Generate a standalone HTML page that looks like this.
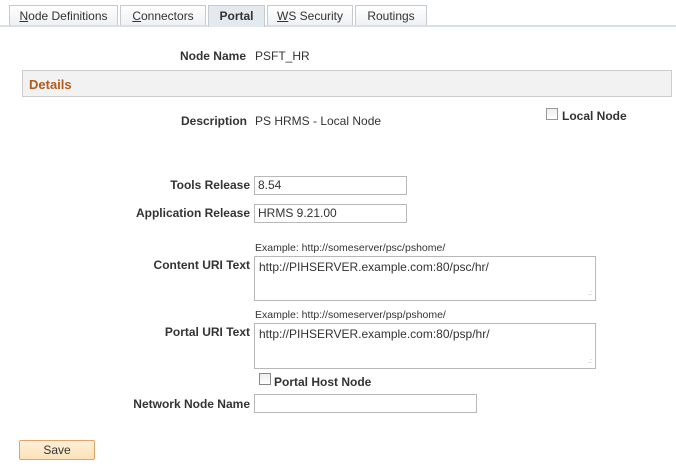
<!DOCTYPE html>
<html><head><style>
body{margin:0;width:676px;height:466px;background:#fff;font-family:"Liberation Sans",Arial,sans-serif;font-size:12px;color:#333;position:relative;overflow:hidden}
.a{position:absolute;white-space:nowrap}
.tab{position:absolute;top:5px;height:20px;border:1px solid #c5cbd2;border-bottom:none;background:linear-gradient(#fff,#eef0f2);box-sizing:border-box;text-align:center;line-height:20px;font-size:12px;color:#333}
.lbl{position:absolute;right:426px;font-weight:bold;color:#333;white-space:nowrap;line-height:14px}
.in{position:absolute;border:1px solid #b8b8b8;box-sizing:border-box;background:#fff;padding:2px 3px;line-height:13px}
.ex{position:absolute;left:255px;font-size:10.5px;color:#333}
.cb{position:absolute;width:12px;height:12px;border:1px solid #999;background:linear-gradient(#eee,#fff);box-sizing:border-box}
.grip{position:absolute;right:3px;bottom:3px;font-size:7px;color:#999;line-height:6px}
</style></head><body>
<div class="a" style="left:0;top:25px;width:676px;height:2px;background:#d7dfe7"></div>
<div class="tab" style="left:9px;width:109px"><u>N</u>ode Definitions</div>
<div class="tab" style="left:120px;width:86px"><u>C</u>onnectors</div>
<div class="tab" style="left:208px;width:57px;height:22px;background:#e4e9ee;font-weight:bold;line-height:20px">Portal</div>
<div class="tab" style="left:267px;width:86px"><u>W</u>S Security</div>
<div class="tab" style="left:355px;width:72px">Routings</div>

<div class="lbl" style="top:49px;right:430px">Node Name</div>
<div class="a" style="left:255px;top:49px">PSFT_HR</div>

<div class="a" style="left:22px;top:70px;width:650px;height:27px;background:#f2f2f2;border:1px solid #ccc;box-sizing:border-box"></div>
<div class="a" style="left:29px;top:77px;font-weight:bold;color:#b35c1e;font-size:13px">Details</div>

<div class="lbl" style="top:114px;right:429px">Description</div>
<div class="a" style="left:255px;top:114px">PS HRMS - Local Node</div>
<div class="cb" style="left:546px;top:108px"></div>
<div class="a" style="left:562px;top:109px;font-weight:bold">Local Node</div>

<div class="lbl" style="top:178px">Tools Release</div>
<div class="in" style="left:254px;top:176px;width:153px;height:19px">8.54</div>
<div class="lbl" style="top:206px">Application Release</div>
<div class="in" style="left:254px;top:204px;width:153px;height:19px">HRMS 9.21.00</div>

<div class="ex" style="top:242px">Example: http://someserver/psc/pshome/</div>
<div class="lbl" style="top:258px">Content URI Text</div>
<div class="in" style="left:254px;top:256px;width:342px;height:45px;padding:4px">http://PIHSERVER.example.com:80/psc/hr/<div class="grip">.:</div></div>

<div class="ex" style="top:309px">Example: http://someserver/psp/pshome/</div>
<div class="lbl" style="top:325px">Portal URI Text</div>
<div class="in" style="left:254px;top:323px;width:342px;height:46px;padding:4px">http://PIHSERVER.example.com:80/psp/hr/<div class="grip">.:</div></div>

<div class="cb" style="left:259px;top:373px;border-color:#888"></div>
<div class="a" style="left:274px;top:375px;font-weight:bold">Portal Host Node</div>

<div class="lbl" style="top:397px">Network Node Name</div>
<div class="in" style="left:254px;top:394px;width:223px;height:19px"></div>

<div class="a" style="left:19px;top:440px;width:76px;height:20px;box-sizing:border-box;border:1px solid #e0a467;border-radius:2px;background:linear-gradient(#fdf0d8,#fbe2b8);text-align:center;line-height:18px;color:#333">Save</div>
</body></html>
